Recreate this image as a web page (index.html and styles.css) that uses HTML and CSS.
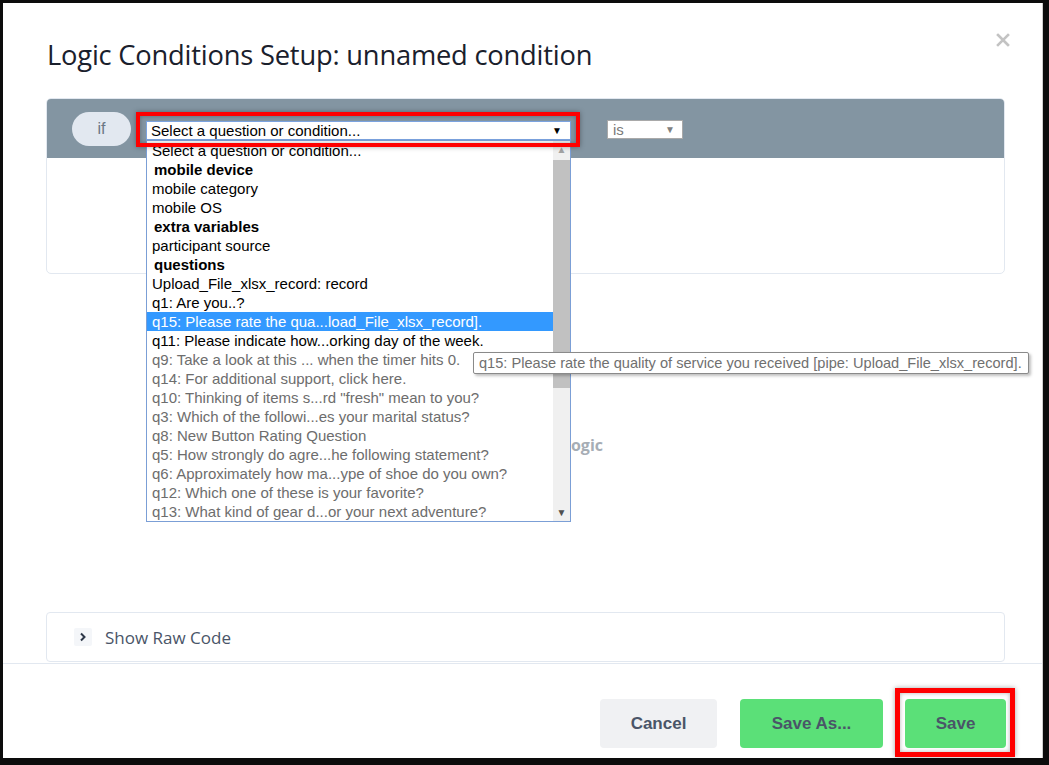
FILE: index.html
```html
<!DOCTYPE html>
<html lang="en">
<head>
    <meta charset="UTF-8">
    <meta name="viewport" content="width=device-width, initial-scale=1.0">
    <title>Logic Conditions Setup</title>
    <link rel="stylesheet" href="styles.css">
</head>
<body>
    <div class="modal">
        <div class="modal-header">
            <h1>Logic Conditions Setup: unnamed condition</h1>
            <button class="close" aria-label="Close">
                <svg width="14" height="14" viewBox="0 0 14 14">
                    <path d="M2 2 L12 12 M12 2 L2 12" stroke="#c3c3c3" stroke-width="2.6" stroke-linecap="square"/>
                </svg>
            </button>
        </div>

        <div class="modal-body">
            <div class="condition">
                <div class="condition-head">
                    <div class="pill">if</div>
                    <div class="select-wrap">
                        <div class="select">
                            <span>Select a question or condition...</span>
                            <span class="arrow">&#9660;</span>
                        </div>
                        <div class="highlight"></div>
                        <div class="dropdown">
                            <ul class="options">
                                <li>Select a question or condition...</li>
                                <li class="group">mobile device</li>
                                <li>mobile category</li>
                                <li>mobile OS</li>
                                <li class="group">extra variables</li>
                                <li>participant source</li>
                                <li class="group">questions</li>
                                <li>Upload_File_xlsx_record: record</li>
                                <li>q1: Are you..?</li>
                                <li class="selected">q15: Please rate the qua...load_File_xlsx_record].</li>
                                <li>q11: Please indicate how...orking day of the week.</li>
                                <li class="disabled">q9: Take a look at this ... when the timer hits 0.</li>
                                <li class="disabled">q14: For additional support, click here.</li>
                                <li class="disabled">q10: Thinking of items s...rd "fresh" mean to you?</li>
                                <li class="disabled">q3: Which of the followi...es your marital status?</li>
                                <li class="disabled">q8: New Button Rating Question</li>
                                <li class="disabled">q5: How strongly do agre...he following statement?</li>
                                <li class="disabled">q6: Approximately how ma...ype of shoe do you own?</li>
                                <li class="disabled">q12: Which one of these is your favorite?</li>
                                <li class="disabled">q13: What kind of gear d...or your next adventure?</li>
                            </ul>
                            <div class="scrollbar">
                                <span class="scroll-up">&#9650;</span>
                                <div class="thumb"></div>
                                <span class="scroll-down">&#9660;</span>
                            </div>
                        </div>
                        <div class="tooltip">q15: Please rate the quality of service you received [pipe: Upload_File_xlsx_record].</div>
                    </div>
                    <div class="small-select">
                        <span>is</span>
                        <span class="arrow">&#9660;</span>
                    </div>
                </div>
                <div class="condition-body"></div>
            </div>

            <div class="add-row">
                <span class="add-logic">+ Add Logic</span>
            </div>

            <div class="raw-code">
                <span class="chevron">
                    <svg width="8" height="10" viewBox="0 0 8 10">
                        <path d="M2 1.5 L5.5 5 L2 8.5" fill="none" stroke="#2d3748" stroke-width="2"/>
                    </svg>
                </span>
                <span>Show Raw Code</span>
            </div>
        </div>

        <div class="modal-footer">
            <button class="btn btn-cancel">Cancel</button>
            <button class="btn btn-green">Save As...</button>
            <div class="save-wrap">
                <button class="btn btn-green btn-save">Save</button>
                <div class="highlight save-highlight"></div>
            </div>
        </div>
    </div>
</body>
</html>
```

FILE: styles.css
```css
html, body {
    margin: 0;
    padding: 0;
}

body {
    background-color: #0c0c0c;
    width: 1049px;
    height: 765px;
    overflow: hidden;
}

.modal {
    margin: 3px 0 0 3px;
    width: 1039px;
    height: 755px;
    background-color: #fff;
    border-right: 1px solid #cfcfcf;
    display: flex;
    flex-direction: column;
    font-family: "Open Sans", sans-serif;
}

/* header */

.modal-header {
    display: flex;
    justify-content: space-between;
    align-items: flex-start;
    padding: 35px 32px 27px 44px;
}

.modal-header h1 {
    margin: 0;
    font-size: 27.3px;
    line-height: 33px;
    font-weight: 500;
    color: #1a202c;
    letter-spacing: -0.2px;
}

.close {
    border: none;
    background: none;
    padding: 0;
    margin-top: -5px;
    cursor: pointer;
}

/* body */

.modal-body {
    flex: 1;
    overflow: hidden;
    padding: 0 37px 0 43px;
}

.condition {
    border: 1px solid #e2e8f0;
    border-radius: 5px;
    height: 174px;
}

.condition-head {
    background-color: #8395a2;
    border-radius: 4px 4px 0 0;
    height: 59px;
    display: flex;
    align-items: center;
    padding-left: 25px;
}

.pill {
    width: 59px;
    height: 34px;
    border-radius: 17px;
    background-color: #e2e8f0;
    color: #6b7785;
    font-family: "Liberation Sans", Arial, sans-serif;
    font-size: 16px;
    display: flex;
    align-items: center;
    justify-content: center;
    margin-top: 1px;
}

.select-wrap {
    position: relative;
    margin-left: 15px;
    margin-top: 3px;
}

.select,
.small-select {
    box-sizing: border-box;
    height: 19px;
    background-color: #fff;
    font-family: "Liberation Sans", Arial, sans-serif;
    font-size: 15px;
    display: flex;
    align-items: center;
    justify-content: space-between;
}

.select {
    width: 425px;
    border: 1px solid #7ba3e0;
    padding: 0 8px 0 4px;
    color: #000;
}

.arrow {
    font-size: 10px;
}

.small-select {
    width: 76px;
    margin-left: 36px;
    margin-top: 1px;
    border: 1px solid #a9a9a9;
    padding: 0 7px 0 5px;
    color: #7a7a7a;
}

.small-select .arrow {
    color: #808080;
}

.highlight {
    position: absolute;
    left: -10px;
    top: -9px;
    width: 444px;
    height: 35px;
    box-sizing: border-box;
    border: 4px solid #ff0000;
    box-shadow: 0 0 5px rgba(0, 0, 0, 0.35), inset 0 0 4px rgba(0, 0, 0, 0.3);
    z-index: 3;
}

.dropdown {
    position: absolute;
    left: 0;
    top: 19px;
    width: 425px;
    height: 382px;
    box-sizing: border-box;
    border: 1px solid #7b9fd6;
    background-color: #fff;
    display: flex;
    z-index: 2;
}

.options {
    list-style: none;
    margin: 0;
    padding: 0;
    flex: 1;
    font-family: "Liberation Sans", Arial, sans-serif;
    font-size: 15px;
    color: #000;
}

.options li {
    height: 19px;
    line-height: 19px;
    padding-left: 5px;
    white-space: nowrap;
}

.options li.group {
    font-weight: bold;
    padding-left: 7px;
}

.options li.selected {
    background-color: #3399ff;
    color: #fff;
}

.options li.disabled {
    color: #6d6d6d;
}

.scrollbar {
    width: 17px;
    background-color: #f0f0f0;
    display: flex;
    flex-direction: column;
    align-items: center;
}

.scroll-up,
.scroll-down {
    height: 17px;
    line-height: 17px;
    font-size: 10px;
}

.scroll-up {
    color: #a3a3a3;
}

.scroll-down {
    color: #505050;
    margin-top: auto;
}

.thumb {
    width: 17px;
    height: 228px;
    margin-top: 2px;
    background-color: #c1c1c1;
}

.tooltip {
    position: absolute;
    left: 327px;
    top: 231px;
    height: 22px;
    box-sizing: border-box;
    padding: 0 6px 0 5px;
    line-height: 20px;
    border: 1px solid #8a8a8a;
    border-radius: 2px;
    background-color: #fff;
    box-shadow: 2px 2px 3px rgba(0, 0, 0, 0.25);
    color: #707070;
    font-family: "Liberation Sans", Arial, sans-serif;
    font-size: 14.6px;
    white-space: nowrap;
    z-index: 4;
}

.condition-body {
    height: 115px;
}

.add-row {
    display: flex;
    justify-content: flex-end;
    width: 557px;
    margin-top: 159px;
    height: 24px;
    line-height: 24px;
}

.add-logic {
    font-size: 16px;
    font-weight: 700;
    color: #a6adb5;
}

.raw-code {
    margin-top: 155px;
    height: 48px;
    border: 1px solid #e2e8f0;
    border-radius: 4px;
    display: flex;
    align-items: center;
    padding-left: 27px;
    font-size: 17px;
    color: #4a5568;
}

.chevron {
    width: 18px;
    height: 18px;
    background-color: #f4f6f9;
    border-radius: 2px;
    display: flex;
    align-items: center;
    justify-content: center;
    margin-right: 13px;
}

/* footer */

.modal-footer {
    border-top: 1px solid #e2e8f0;
    height: 95px;
    box-sizing: border-box;
    display: flex;
    justify-content: flex-end;
    align-items: flex-start;
    gap: 23px;
    padding: 35px 36px 0 0;
}

.btn {
    height: 49px;
    border: none;
    border-radius: 4px;
    font-family: "Liberation Sans", Arial, sans-serif;
    font-size: 17px;
    font-weight: bold;
    color: #4a5568;
    cursor: pointer;
}

.btn-cancel {
    width: 117px;
    background-color: #f0f1f3;
}

.btn-green {
    width: 143px;
    background-color: #5be078;
}

.save-wrap {
    position: relative;
    margin-left: -1px;
}

.btn-save {
    width: 101px;
}

.save-highlight {
    left: -10px;
    top: -11px;
    width: 120px;
    height: 69px;
    border-width: 5px;
}
```
